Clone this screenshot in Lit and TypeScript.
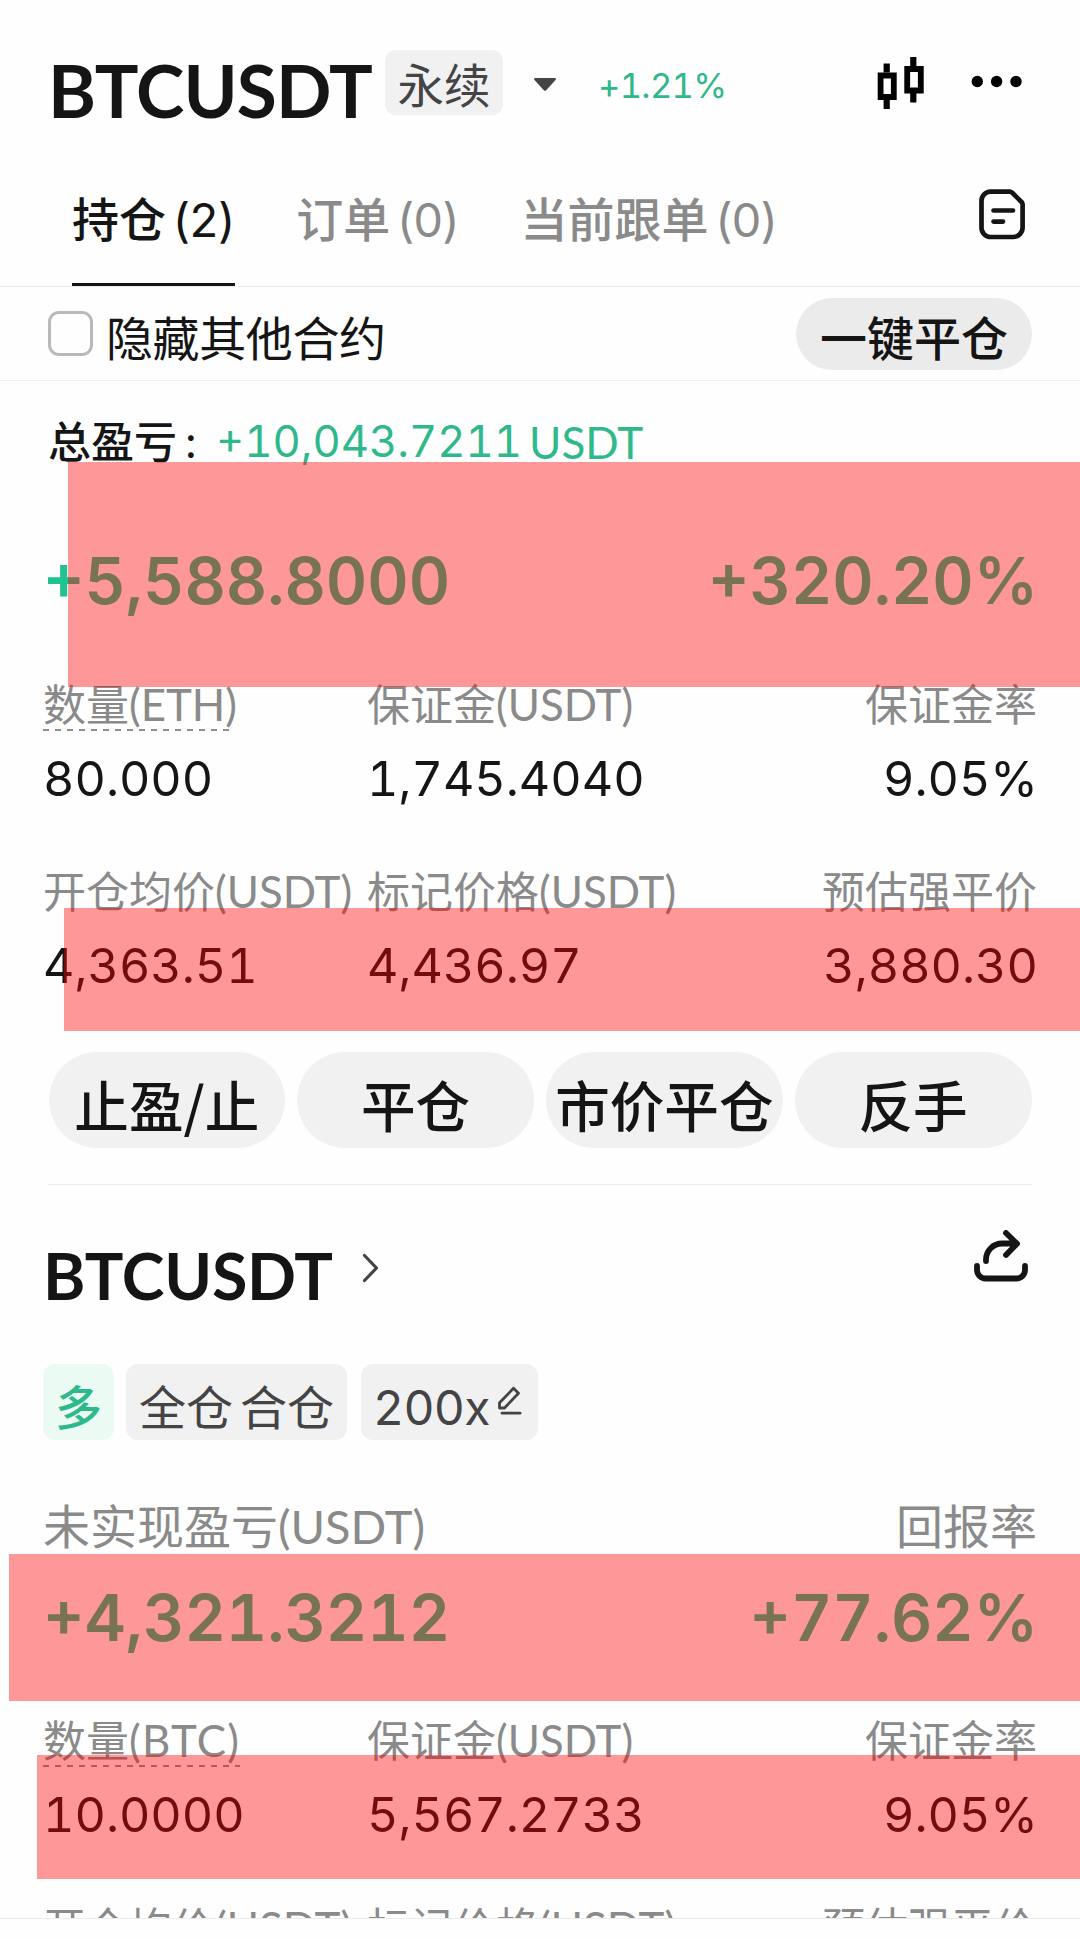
import { LitElement, html, css, svg, nothing } from "lit";
import { customElement, property } from "lit/decorators.js";

interface Cell {
  label: string;
  unit?: string;
  value: string;
  dash?: number;
}

const ethRows: Cell[][] = [
  [
    { label: "数量", unit: "(ETH)", value: "80.000", dash: 188 },
    { label: "保证金", unit: "(USDT)", value: "1,745.4040" },
    { label: "保证金率", value: "9.05%" },
  ],
  [
    { label: "开仓均价", unit: "(USDT)", value: "4,363.51" },
    { label: "标记价格", unit: "(USDT)", value: "4,436.97" },
    { label: "预估强平价", value: "3,880.30" },
  ],
];

const btcRows: Cell[][] = [
  [
    { label: "数量", unit: "(BTC)", value: "10.0000", dash: 197 },
    { label: "保证金", unit: "(USDT)", value: "5,567.2733" },
    { label: "保证金率", value: "9.05%" },
  ],
  [
    { label: "开仓均价", unit: "(USDT)", value: "" },
    { label: "标记价格", unit: "(USDT)", value: "" },
    { label: "预估强平价", value: "" },
  ],
];

const tabs = [
  { name: "持仓", count: "(2)", active: true },
  { name: "订单", count: "(0)", active: false },
  { name: "当前跟单", count: "(0)", active: false },
];

const candles = svg`<g fill="none" stroke="#000">
  <path stroke-width="6.200" d="M9.700 7.500v9M9.700 43v10M36.300 1v9M36.300 36v10.500"/>
  <path stroke-width="5.800" d="M3.600 19.500h13.200v21.500h-13.200zM30.200 13h13.600v21.500h-13.600z"/>
</g>`;

@customElement("metric-rows")
export class MetricRows extends LitElement {
  @property({ attribute: false }) rows: Cell[][] = [];

  static styles = css`
    :host {
      display: flex;
      flex-direction: column;
      gap: 57.5px;
      font-feature-settings: "tnum";
    }
    .row {
      display: grid;
      grid-template-columns: 324px 1fr auto;
    }
    .cell {
      white-space: nowrap;
    }
    .cell:last-child {
      text-align: right;
    }
    .label {
      height: 50px;
      line-height: 50px;
      font-family: Lato, "Noto Sans CJK SC", sans-serif;
      font-size: 43px;
      color: #8a8a8a;
    }
    .unit {
      font-size: 43.8px;
    }
    .unit.wide {
      letter-spacing: 1.3px;
    }
    .dash {
      height: 2px;
      margin-bottom: -2px;
      background: repeating-linear-gradient(90deg, #8f8f8f 0 6px, transparent 6px 12px);
    }
    .value {
      margin-top: 19.5px;
      line-height: 60px;
      font-family: Inter, sans-serif;
      font-size: 48.5px;
      color: #151515;
    }
    .cell:last-child .value {
      margin-right: -1px;
    }
  `;

  render() {
    return this.rows.map(
      (r) => html`<div class="row">
        ${r.map(
          (c) => html`<div class="cell">
            <div class="label">${c.label}<span class="unit ${c.unit === "(BTC)" ? "wide" : ""}">${c.unit ?? ""}</span></div>
            ${c.dash ? html`<div class="dash" style="width:${c.dash}px"></div>` : nothing}
            ${c.value ? html`<div class="value">${c.value}</div>` : nothing}
          </div>`
        )}
      </div>`
    );
  }
}

@customElement("app-root")
export class AppRoot extends LitElement {
  static styles = css`
    :host {
      display: block;
      position: relative;
      width: 1080px;
      height: 1939px;
      overflow: hidden;
      background: #fefefe;
      color: #151515;
      font-family: Inter, "Noto Sans CJK SC", sans-serif;
      font-feature-settings: "tnum";
      white-space: nowrap;
    }
    * {
      box-sizing: border-box;
    }
    svg {
      display: block;
      flex: none;
    }
    .header {
      display: flex;
      align-items: flex-start;
      height: 160px;
      padding: 50px 56px 0 48px;
    }
    .pair {
      font-family: Lato, sans-serif;
      font-weight: 700;
      line-height: 80px;
    }
    .header .pair {
      width: 337px;
      font-size: 73px;
      letter-spacing: -0.8px;
    }
    .perp {
      width: 118px;
      height: 65px;
      border-radius: 11px;
      background: #f1f1f1;
      color: #444446;
      font-family: "Noto Sans CJK SC", sans-serif;
      font-size: 46.5px;
      line-height: 65px;
      text-align: center;
    }
    .caret {
      margin: 28px 0 0 31px;
    }
    .change {
      margin: 16px 0 0 42px;
      font-size: 34.5px;
      line-height: 40px;
      letter-spacing: -0.7px;
      color: #2fb98b;
    }
    .candles {
      margin: 6px 0 0 auto;
    }
    .dots {
      margin: 25px 0 0 47px;
    }
    .tabs {
      display: flex;
      align-items: flex-start;
      height: 127px;
      padding: 0 54px 0 72px;
      gap: 61.5px;
      border-bottom: 1px solid #ececec;
    }
    .tab {
      height: 126px;
      padding-top: 29.5px;
      font-size: 47px;
      line-height: 60px;
      color: #8a8a8a;
    }
    .tab.on {
      color: #151515;
      border-bottom: 3px solid #151515;
    }
    .name {
      font-weight: 500;
    }
    .count {
      margin-left: 6px;
      letter-spacing: -1.5px;
    }
    .doc {
      margin: 28px 0 0 auto;
    }
    .filter {
      display: flex;
      align-items: center;
      height: 94px;
      padding: 0 48px;
      border-bottom: 1px solid #efefef;
      font-family: "Noto Sans CJK SC", sans-serif;
      font-size: 47px;
    }
    .box {
      width: 45px;
      height: 45px;
      border: 3px solid #b9b9b9;
      border-radius: 11px;
    }
    .hide {
      margin-left: 13px;
      padding-top: 4px;
      line-height: 60px;
      letter-spacing: -0.4px;
    }
    .closeall {
      width: 236px;
      height: 72px;
      margin-left: auto;
      padding-top: 3px;
      border-radius: 36px;
      background: #ebebeb;
      font-weight: 500;
      line-height: 70px;
      text-align: center;
    }
    .total {
      display: flex;
      height: 160px;
      padding: 31px 48px 0;
      font-size: 43px;
      line-height: 60px;
    }
    .colon {
      width: 39px;
      padding-left: 8px;
    }
    .green {
      color: #2fb98b;
      font-size: 43.6px;
    }
    .unit {
      margin-left: 7px;
      font-family: Lato, sans-serif;
      font-size: 44px;
    }
    .big {
      display: flex;
      justify-content: space-between;
      padding: 0 42px 0 43px;
      font-size: 64px;
      font-weight: 600;
      line-height: 80px;
      color: #1fc290;
    }
    .metrics {
      padding: 58px 43px 0;
    }
    .actions {
      display: grid;
      grid-template-columns: repeat(4, 1fr);
      gap: 12px;
      padding: 56.5px 48.5px 0;
      font-family: "Noto Sans CJK SC", sans-serif;
      font-size: 54.6px;
      font-weight: 500;
    }
    .action {
      display: flex;
      justify-content: center;
      height: 96px;
      padding-top: 4px;
      border-radius: 48px;
      background: #f1f1f1;
      line-height: 96px;
    }
    .rule {
      height: 1px;
      margin: 36px 48px 0;
      background: #ededed;
    }
    .title {
      display: flex;
      align-items: flex-start;
      height: 179px;
      padding: 45px 52px 0 43px;
    }
    .title .pair {
      width: 319px;
      margin-top: 5px;
      font-size: 64.5px;
      letter-spacing: -0.2px;
    }
    .chev {
      margin-top: 22px;
    }
    .share {
      margin-left: auto;
    }
    .tags {
      display: flex;
      height: 76px;
      padding-left: 43px;
      font-family: "Noto Sans CJK SC", sans-serif;
      font-size: 47px;
      line-height: 81px;
      color: #444446;
    }
    .tag {
      display: flex;
      justify-content: center;
      height: 76px;
      border-radius: 12px;
      background: #f1f1f1;
    }
    .long {
      width: 71px;
      margin-right: 12px;
      background: #ebfbf4;
      color: #2fb98b;
      font-weight: 500;
    }
    .mode {
      width: 221px;
      margin-right: 14px;
      gap: 7px;
    }
    .lever {
      width: 177px;
      justify-content: flex-start;
      padding-left: 12px;
      font-family: Inter, sans-serif;
      font-size: 48px;
      letter-spacing: -0.7px;
      line-height: 87px;
    }
    .pen {
      margin: 21px 0 0 7px;
    }
    .pnl {
      display: flex;
      justify-content: space-between;
      padding: 61px 43px 27px;
      font-family: Lato, "Noto Sans CJK SC", sans-serif;
      font-size: 47px;
      line-height: 50px;
      color: #8a8a8a;
    }
    .metrics.low {
      height: 260px;
      padding-top: 57px;
      overflow: hidden;
    }
    .end {
      height: 21px;
      border-top: 1px solid #ececec;
    }
    .mark {
      position: absolute;
      right: 0;
      background: rgba(255, 0, 0, 0.404);
    }
    .m1 {
      left: 67.5px;
      top: 462px;
      height: 225px;
    }
    .m2 {
      left: 63.5px;
      top: 908px;
      height: 122.5px;
    }
    .m3 {
      left: 8.5px;
      top: 1554px;
      height: 146.5px;
    }
    .m4 {
      left: 37px;
      top: 1754.5px;
      height: 124px;
    }
  `;

  render() {
    return html`
      <div class="header">
        <div class="pair">BTCUSDT</div>
        <div class="perp">永续</div>
        <svg class="caret" width="22" height="14" viewBox="0 0 22 14"><path fill="#444446" d="M1.500 0h19c1.200 0 1.800 1.200 1 2l-9.300 10.200c-.7.700-1.700.700-2.400 0L.5 2C-.3 1.200.3 0 1.500 0z"/></svg>
        <div class="change">+1.21%</div>
        <svg class="candles" width="47" height="54" viewBox="0 0 47 54">${candles}</svg>
        <svg class="dots" width="53" height="13" viewBox="0 0 53 13"><circle cx="6.300" cy="6.500" r="5.700"/><circle cx="25.600" cy="6.500" r="5.700"/><circle cx="45" cy="6.500" r="5.700"/></svg>
      </div>
      <div class="tabs">
        ${tabs.map((t) => html`<div class="tab ${t.active ? "on" : ""}"><span class="name">${t.name}</span><span class="count">${t.count}</span></div>`)}
        <svg class="doc" width="47" height="52" viewBox="0 0 47 52" fill="none" stroke="#151515" stroke-width="4.700" stroke-linecap="round" stroke-linejoin="round"><path d="M11.500 3.700H31.500L33 4.500L43 14.500L43.600 16V39.500a9.500 9.500 0 0 1-9.500 9.500H11.700a9.200 9.200 0 0 1-9.200-9.200V12.900a9.200 9.200 0 0 1 9-9.200z"/><path d="M14.500 22.500h19.500M14.500 33.600h9.500"/></svg>
      </div>
      <div class="filter">
        <div class="box"></div>
        <div class="hide">隐藏其他合约</div>
        <div class="closeall">一键平仓</div>
      </div>
      <div class="total">
        <span class="name">总盈亏</span><span class="colon">:</span><span class="green">+10,043.7211</span><span class="green unit">USDT</span>
      </div>
      <div class="big"><span>+5,588.8000</span><span>+320.20%</span></div>
      <div class="metrics"><metric-rows .rows=${ethRows}></metric-rows></div>
      <div class="actions">
        <div class="action">止盈/止</div>
        <div class="action">平仓</div>
        <div class="action">市价平仓</div>
        <div class="action">反手</div>
      </div>
      <div class="rule"></div>
      <div class="title">
        <div class="pair">BTCUSDT</div>
        <svg class="chev" width="19" height="32" viewBox="0 0 19 32" fill="none" stroke="#444446" stroke-width="3.200" stroke-linecap="round" stroke-linejoin="round"><path d="M2.500 3.500L14.500 16L2.500 28.500"/></svg>
        <svg class="share" width="54" height="52" viewBox="0 0 54 52" fill="none" stroke="#151515" stroke-width="5.800" stroke-linecap="round" stroke-linejoin="round"><path d="M3 36v4a8.500 8.500 0 0 0 8.500 8.500h31A8.500 8.500 0 0 0 51 40v-4"/><path d="M12 31v-1.500a16 16 0 0 1 16-16H42M32 3l11 10.700L32 25"/></svg>
      </div>
      <div class="tags">
        <div class="tag long">多</div>
        <div class="tag mode"><span>全仓</span><span>合仓</span></div>
        <div class="tag lever">200x<svg class="pen" width="26" height="30" viewBox="0 0 26 30" fill="none" stroke="#444446" stroke-width="2.800" stroke-linecap="round" stroke-linejoin="round"><path d="M2.500 23v-5.300L16.500 3.300l5 5L7.500 23z"/><path d="M5 28.200h18"/></svg></div>
      </div>
      <div class="pnl"><span>未实现盈亏(USDT)</span><span>回报率</span></div>
      <div class="big"><span>+4,321.3212</span><span>+77.62%</span></div>
      <div class="metrics low"><metric-rows .rows=${btcRows}></metric-rows></div>
      <div class="end"></div>
      <div class="mark m1"></div>
      <div class="mark m2"></div>
      <div class="mark m3"></div>
      <div class="mark m4"></div>
    `;
  }
}
